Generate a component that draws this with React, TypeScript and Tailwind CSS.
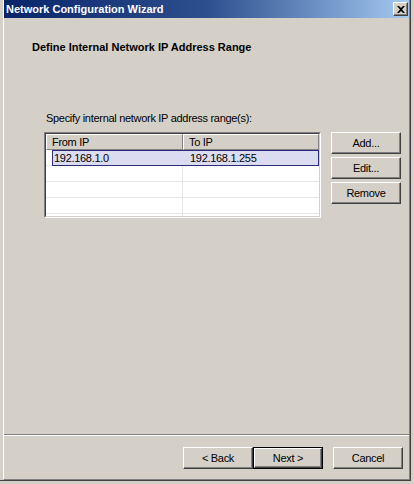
const btn =
  "w-[70px] h-[22px] bg-[#d4d0c8] border border-t-white border-l-white border-r-[#404040] border-b-[#404040] shadow-[inset_-1px_-1px_#808080] flex items-center justify-center text-[11px] tracking-[-0.3px] text-black leading-none";

function Button({ label, isDefault }: { label: string; isDefault?: boolean }) {
  if (isDefault) {
    return (
      <div className="w-[70px] h-[22px] border border-black">
        <div className="w-full h-full bg-[#d4d0c8] border border-t-white border-l-white border-r-[#404040] border-b-[#404040] shadow-[inset_-1px_-1px_#808080] flex items-center justify-center text-[11px] tracking-[-0.3px] text-black leading-none">
          {label}
        </div>
      </div>
    )
  }
  return <div className={btn}>{label}</div>
}

function Row({ from, to, selected }: { from?: string; to?: string; selected?: boolean }) {
  return (
    <div className="relative flex h-[16px] border-b border-[#e6e6e6] text-[11px] tracking-[-0.3px] text-black leading-none">
      <div className="w-[137px] border-r border-[#e6e6e6]" />
      <div className="flex-1" />
      {selected && (
        <div className="absolute left-[6px] right-0 top-0 h-[16px] bg-[#dcdcf0] border border-[#2c2c7a] flex items-center">
          <span className="w-[131px] pl-[1px]">{from}</span>
          <span className="pl-[6px]">{to}</span>
        </div>
      )}
    </div>
  )
}

export default function App() {
  return (
    <div className="w-[414px] h-[484px] bg-[#d4d0c8] overflow-hidden font-['Liberation_Sans',Arial,sans-serif]">
      <div className="w-[411px] h-[481px] border-r border-b border-[#404040] pl-[3px]">
        <div className="h-full flex flex-col border-l border-white border-r border-b border-r-[#808080] border-b-[#808080]">
          {/* title bar */}
          <div className="h-[18px] flex items-center pl-[2px] pr-[1px] bg-gradient-to-r from-[#0a246a] via-[#2e4f8e] to-[#a6caf0]">
            <span className="text-white font-bold text-[11px] leading-none">Network Configuration Wizard</span>
            <div className="ml-auto w-[15px] h-[14px] bg-[#d4d0c8] border border-t-white border-l-white border-r-[#404040] border-b-[#404040] shadow-[inset_-1px_-1px_#808080] flex items-center justify-center">
              <svg width="8" height="7" viewBox="0 0 8 7">
                <path d="M0 0h2l2 2 2-2h2L5 3.5 8 7H6L4 5 2 7H0l3-3.5z" fill="black" />
              </svg>
            </div>
          </div>

          <div className="flex-1 flex flex-col">
            <div className="pl-[28px] pt-[23px] text-[11px] font-bold text-black leading-[13px]">
              Define Internal Network IP Address Range
            </div>

            <div className="pl-[42px] pt-[58px] text-[11px] tracking-[-0.3px] text-black leading-[13px]">
              Specify internal network IP address range(s):
            </div>

            <div className="flex pl-[40px] pt-[7px]">
              {/* list view */}
              <div className="w-[277px] h-[86px] border border-t-[#808080] border-l-[#808080] border-r-white border-b-white">
                <div className="w-full h-full bg-white border border-t-[#404040] border-l-[#404040] border-r-[#d4d0c8] border-b-[#d4d0c8] overflow-hidden">
                  <div className="flex h-[16px] text-[11px] tracking-[-0.3px] text-black leading-none">
                    <div className="w-[137px] bg-[#d4d0c8] border border-t-white border-l-white border-r-[#808080] border-b-[#808080] flex items-center pl-[5px]">
                      From IP
                    </div>
                    <div className="flex-1 bg-[#d4d0c8] border border-t-white border-l-white border-r-[#808080] border-b-[#808080] flex items-center pl-[5px]">
                      To IP
                    </div>
                  </div>
                  <Row from="192.168.1.0" to="192.168.1.255" selected />
                  <Row />
                  <Row />
                  <Row />
                  <Row />
                </div>
              </div>

              <div className="flex flex-col gap-[3px] pl-[10px]">
                <Button label="Add..." />
                <Button label="Edit..." />
                <Button label="Remove" />
              </div>
            </div>

            <div className="flex-1" />

            <div className="h-[2px] border-t border-[#808080] border-b border-b-white" />

            <div className="flex justify-end pr-[6px] pt-[11px] pb-[10px]">
              <Button label="< Back" />
              <Button label="Next >" isDefault />
              <div className="w-[10px]" />
              <Button label="Cancel" />
            </div>
          </div>
        </div>
      </div>
    </div>
  )
}
